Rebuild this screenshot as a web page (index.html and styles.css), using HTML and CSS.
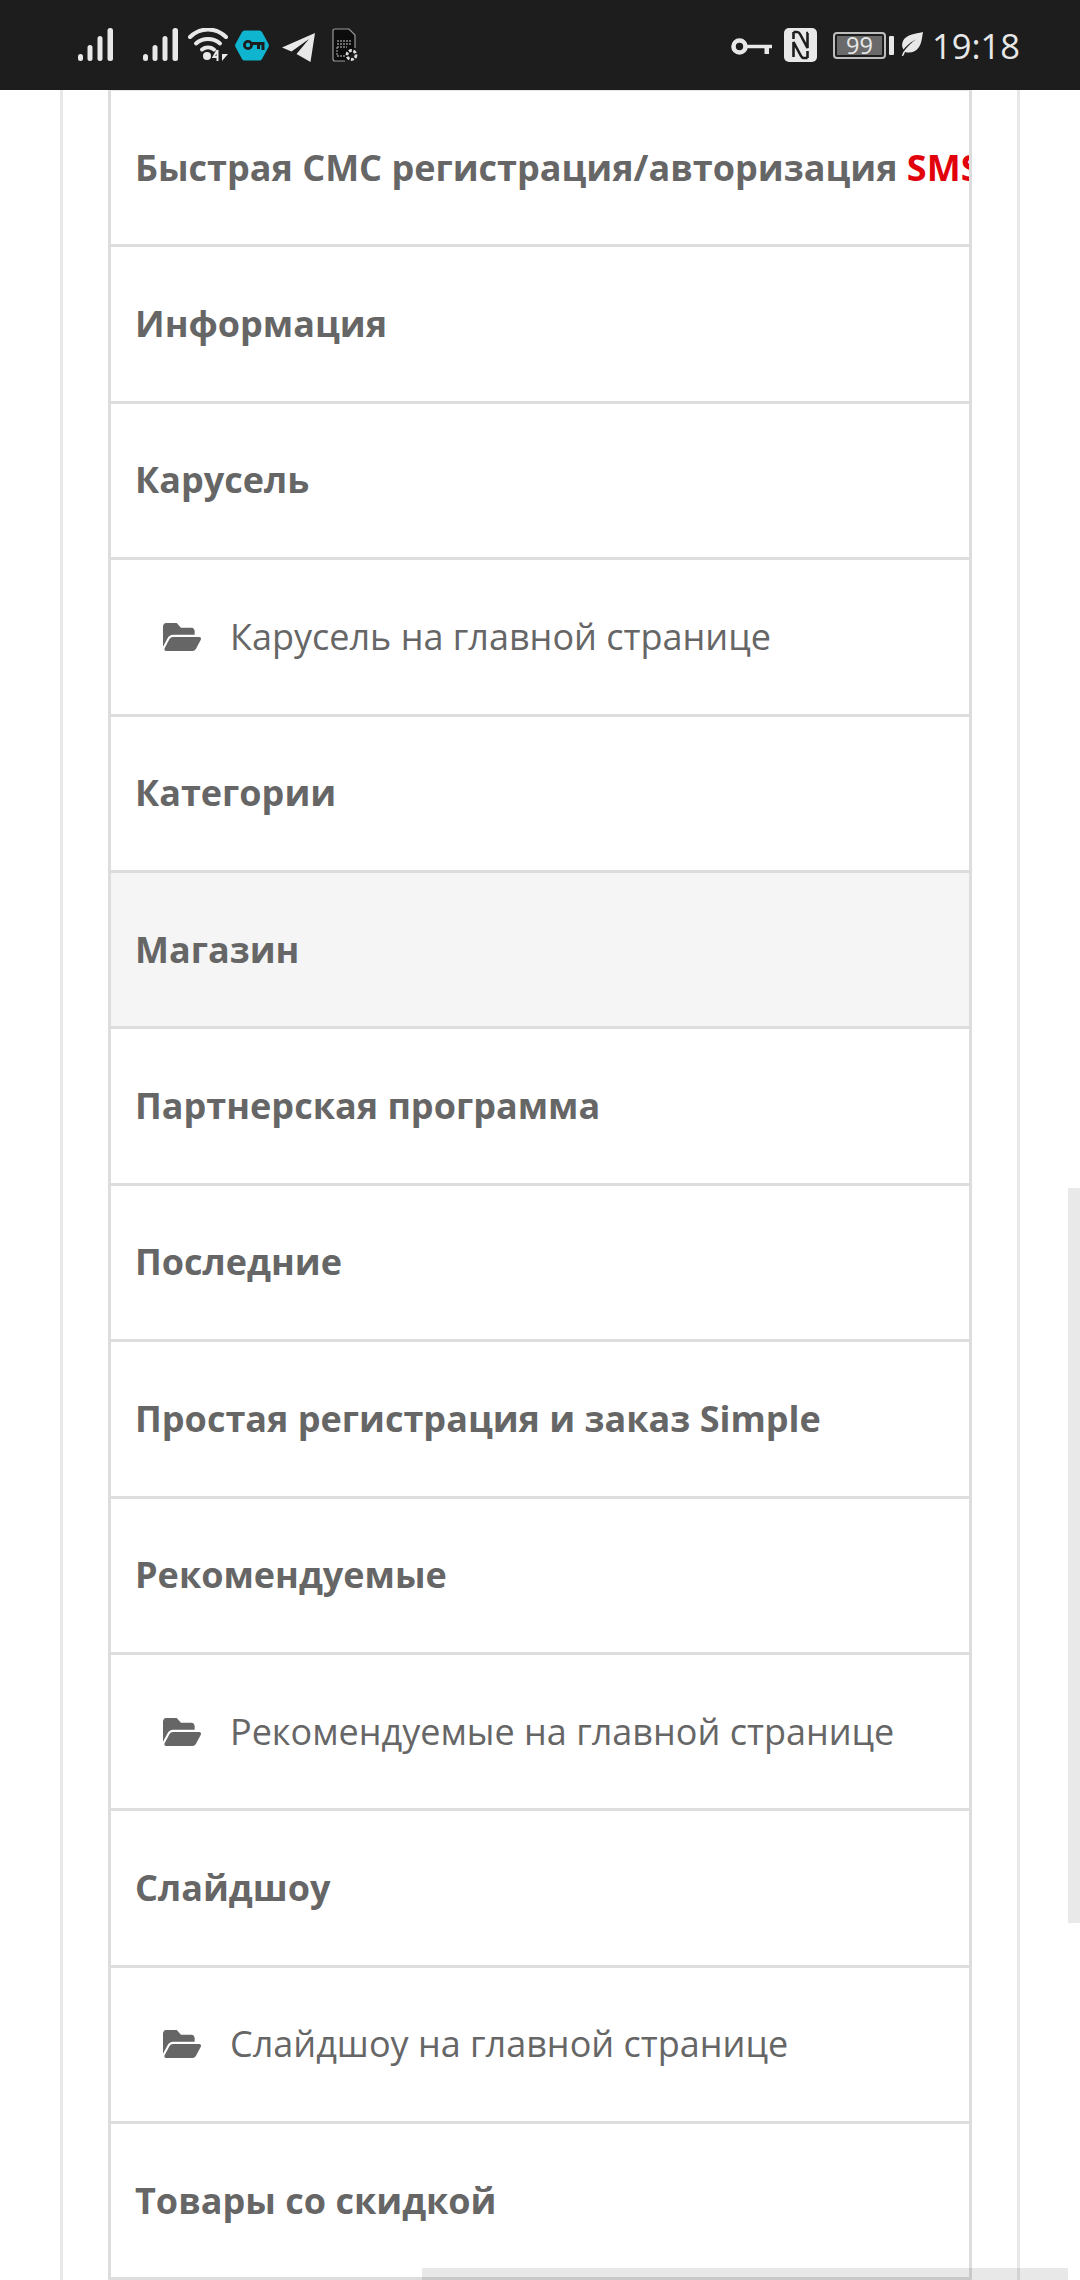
FILE: index.html
```html
<!DOCTYPE html>
<html lang="ru">
<head>
<meta charset="utf-8">
<title>Меню</title>
<link rel="stylesheet" href="styles.css">
</head>
<body>
<header class="status">
  <div class="status-left">
    <svg class="i-signal" viewBox="0 0 35 33"><g fill="#e8e8e8"><rect x="0" y="26" width="5" height="7" rx="2.5"/><rect x="9.5" y="17" width="5" height="16" rx="2.5"/><rect x="19.5" y="8" width="5" height="25" rx="2.5"/><rect x="29.5" y="0" width="5.5" height="33" rx="2.5"/></g></svg>
    <svg class="i-signal sig2" viewBox="0 0 35 33"><g fill="#e8e8e8"><rect x="0" y="26" width="5" height="7" rx="2.5"/><rect x="9.5" y="17" width="5" height="16" rx="2.5"/><rect x="19.5" y="8" width="5" height="25" rx="2.5"/><rect x="29.5" y="0" width="5.5" height="33" rx="2.5"/></g></svg>
    <svg class="i-wifi" viewBox="0 0 40 33"><g fill="none" stroke="#e8e8e8" stroke-width="4" stroke-linecap="round"><path d="M2 9 C12 -1 28 -1 38 9"/><path d="M8 15.500 C14.500 9.500 25.500 9.500 32 15.500"/><path d="M14 21.500 C17.500 18.800 22.500 18.800 26 21.500"/></g><circle cx="19" cy="28" r="4" fill="#e8e8e8"/><path d="M29.500 22 L25.500 29 L30 29 M29.500 22 V33" fill="none" stroke="#e8e8e8" stroke-width="2"/><path d="M34 22 V33 L40 26 H34 Z" fill="#e8e8e8"/></svg>
    <svg class="i-hex" viewBox="0 0 34 33"><path d="M9.500 1.500 H24.500 Q26 1.500 27 3 L33.500 15 Q34.300 16.500 33.500 18 L27 30 Q26 31.500 24.500 31.500 H9.500 Q8 31.500 7 30 L0.500 18 Q-0.300 16.500 0.500 15 L7 3 Q8 1.500 9.500 1.500 Z" fill="#0fb5cf"/><circle cx="13" cy="16" r="3.600" fill="none" stroke="#1d1d1d" stroke-width="2.800"/><path d="M16.500 14.500 H28 V21 M23.500 15 V20" fill="none" stroke="#1d1d1d" stroke-width="3"/></svg>
    <svg class="i-tg" viewBox="0 0 33 29"><path d="M33 0 L0 14.500 L9.500 18.500 L27 6 L14.500 21 L28.500 29 Z" fill="#e8e8e8"/></svg>
    <svg class="i-sim" viewBox="0 0 26 35"><path d="M1 3 Q1 1 3 1 H17 L23 7 V22 L13 33 H3 Q1 33 1 31 Z" fill="#0c0c0c"/><path d="M1 3 Q1 1 3 1 H17 L23 7 V20 M13 33 H3 Q1 33 1 31 V3" fill="none" stroke="#9a9a9a" stroke-width="1.200"/><path d="M5 13 H20 M5 16 H20 M5 19 V28 H14 M5 19 H15" fill="none" stroke="#8a8a8a" stroke-width="1.300" stroke-dasharray="2 1"/><circle cx="19.500" cy="27" r="4.500" fill="none" stroke="#dcdcdc" stroke-width="2.800" stroke-dasharray="3 1.500"/></svg>
  </div>
  <div class="status-right">
    <svg class="i-key" viewBox="0 0 41 17"><circle cx="8.500" cy="8.500" r="6" fill="none" stroke="#e8e8e8" stroke-width="4.600"/><path d="M15 6.800 H41 V10.200 H38 V16 H33.500 V10.200 H15 Z" fill="#e8e8e8"/></svg>
    <svg class="i-nfc" viewBox="0 0 33 34"><rect width="33" height="34" rx="5" fill="#e8e8e8"/><path d="M9.500 4 H13 Q15 4 16 6 L23.500 20 V5 H24 M9.500 29 V14 L17 28 Q18 30 20 30 H23.500 M9.500 4 V11 M23.500 30 V23" fill="none" stroke="#1d1d1d" stroke-width="2.600"/></svg>
    <div class="battery">
      <div class="batt-body"><span class="batt-fill">99</span></div>
      <span class="batt-nub"></span>
    </div>
    <svg class="i-leaf" viewBox="0 0 22 24"><path d="M22 0 C14 2 5 2.500 2 9 C0.500 12.500 1 15.500 2.500 17.500 C7 12 11 9.500 15 7.500 C10.500 10.500 6 15 2 20.500 L0.800 24 C1.800 24 2.600 23.500 3 22.500 L4 20 C9 21.500 15 20 18 15 C21 10.500 21 5 22 0 Z" fill="#e8e8e8"/></svg>
    <span class="time">19:18</span>
  </div>
</header>

<main class="outer">
  <div class="inner">
    <div class="row row-first"><a class="head">Быстрая СМС регистрация/авторизация <span class="red">SMS</span></a></div>
    <div class="row"><a class="head">Информация</a></div>
    <div class="row"><a class="head">Карусель</a></div>
    <div class="row sub">
      <svg class="folder" viewBox="0 64 576 384" preserveAspectRatio="none"><path d="M572.694 292.093L500.27 416.248A63.997 63.997 0 0 1 444.989 448H45.025c-18.523 0-30.064-20.093-20.731-36.093l72.424-124.155A64 64 0 0 1 152 256h399.964c18.523 0 30.064 20.093 20.73 36.093zM152 224h328v-48c0-26.51-21.49-48-48-48H272l-64-64H48C21.49 64 0 85.490 0 112v278.046l69.077-118.418C86.214 242.25 117.989 224 152 224z"/></svg>
      <a class="link">Карусель на главной странице</a>
    </div>
    <div class="row"><a class="head">Категории</a></div>
    <div class="row active"><a class="head">Магазин</a></div>
    <div class="row"><a class="head">Партнерская программа</a></div>
    <div class="row"><a class="head">Последние</a></div>
    <div class="row"><a class="head">Простая регистрация и заказ Simple</a></div>
    <div class="row"><a class="head">Рекомендуемые</a></div>
    <div class="row sub">
      <svg class="folder" viewBox="0 64 576 384" preserveAspectRatio="none"><path d="M572.694 292.093L500.27 416.248A63.997 63.997 0 0 1 444.989 448H45.025c-18.523 0-30.064-20.093-20.731-36.093l72.424-124.155A64 64 0 0 1 152 256h399.964c18.523 0 30.064 20.093 20.73 36.093zM152 224h328v-48c0-26.51-21.49-48-48-48H272l-64-64H48C21.49 64 0 85.490 0 112v278.046l69.077-118.418C86.214 242.25 117.989 224 152 224z"/></svg>
      <a class="link">Рекомендуемые на главной странице</a>
    </div>
    <div class="row"><a class="head">Слайдшоу</a></div>
    <div class="row sub">
      <svg class="folder" viewBox="0 64 576 384" preserveAspectRatio="none"><path d="M572.694 292.093L500.27 416.248A63.997 63.997 0 0 1 444.989 448H45.025c-18.523 0-30.064-20.093-20.731-36.093l72.424-124.155A64 64 0 0 1 152 256h399.964c18.523 0 30.064 20.093 20.73 36.093zM152 224h328v-48c0-26.51-21.49-48-48-48H272l-64-64H48C21.49 64 0 85.490 0 112v278.046l69.077-118.418C86.214 242.25 117.989 224 152 224z"/></svg>
      <a class="link">Слайдшоу на главной странице</a>
    </div>
    <div class="row"><a class="head">Товары со скидкой</a></div>
  </div>
</main>

<div class="scroll-v"></div>
<div class="scroll-h"></div>
</body>
</html>
```
FILE: styles.css
```css
* { box-sizing: border-box; }
html, body { margin: 0; padding: 0; }
body {
  position: relative;
  width: 1080px;
  height: 2280px;
  overflow: hidden;
  background: #fff;
  font-family: "Open Sans", "Noto Sans", sans-serif;
  color: #666;
}
.status {
  height: 90px;
  background: #1d1d1d;
  display: flex;
  justify-content: space-between;
  padding: 0 60px 0 78px;
}
.status-left, .status-right { display: flex; align-items: flex-start; }
.status svg { display: block; flex: none; }
.i-signal { width: 35px; height: 33px; margin-top: 28px; }
.sig2 { margin-left: 30px; }
.i-wifi { width: 40px; height: 33px; margin-top: 28px; margin-left: 10px; }
.i-hex { width: 34px; height: 33px; margin-top: 29px; margin-left: 7px; }
.i-tg { width: 33px; height: 29px; margin-top: 33px; margin-left: 13px; }
.i-sim { width: 26px; height: 35px; margin-top: 28px; margin-left: 17px; }
.i-key { width: 41px; height: 17px; margin-top: 38px; }
.i-nfc { width: 33px; height: 34px; margin-top: 28px; margin-left: 12px; }
.battery { display: flex; align-items: center; margin-top: 32px; margin-left: 16px; }
.batt-body {
  width: 53px;
  height: 27px;
  border: 2px solid #bdbdbd;
  border-radius: 4px;
  padding: 2px;
  display: flex;
}
.batt-fill {
  flex: 1;
  background: #6a6a6a;
  color: #e8e8e8;
  font-size: 23.5px;
  line-height: 19px;
  text-align: center;
}
.batt-nub { width: 5px; height: 19px; margin-left: 3px; background: #e8e8e8; border-radius: 1px; }
.i-leaf { width: 22px; height: 24px; margin-top: 32px; margin-left: 7px; }
.time {
  margin-left: 9px;
  margin-top: 23px;
  font-size: 34.5px;
  line-height: 46px;
  color: #e8e8e8;
}
.outer {
  width: 960px;
  margin-left: 60px;
  padding: 0 45px;
  border-left: 3px solid #e8e8e8;
  border-right: 3px solid #e8e8e8;
  height: 2190px;
  overflow: hidden;
}
.inner {
  border-left: 3px solid #ddd;
  border-right: 3px solid #ddd;
  border-top: 1px solid #e6e6e6;
}
.row {
  height: 156.4px;
  border-bottom: 3px solid #ddd;
  display: flex;
  align-items: center;
  padding-left: 24px;
  overflow: hidden;
  white-space: nowrap;
  font-size: 36px;
  line-height: 52px;
}
.active { background: #f5f5f5; }
.head { font-weight: 700; color: #666; }
.red { color: #e2020c; }
.sub { padding-left: 52px; }
.folder { width: 38px; height: 28px; fill: #666; flex: none; margin-right: 29px; }
.link { font-weight: 400; color: #666; }
.scroll-v {
  position: absolute;
  left: 1068px;
  top: 1188px;
  width: 12px;
  height: 735px;
  background: #e9e9e9;
}
.scroll-h {
  position: absolute;
  left: 422px;
  top: 2268px;
  width: 646px;
  height: 12px;
  background: rgba(0, 0, 0, 0.09);
}
```
